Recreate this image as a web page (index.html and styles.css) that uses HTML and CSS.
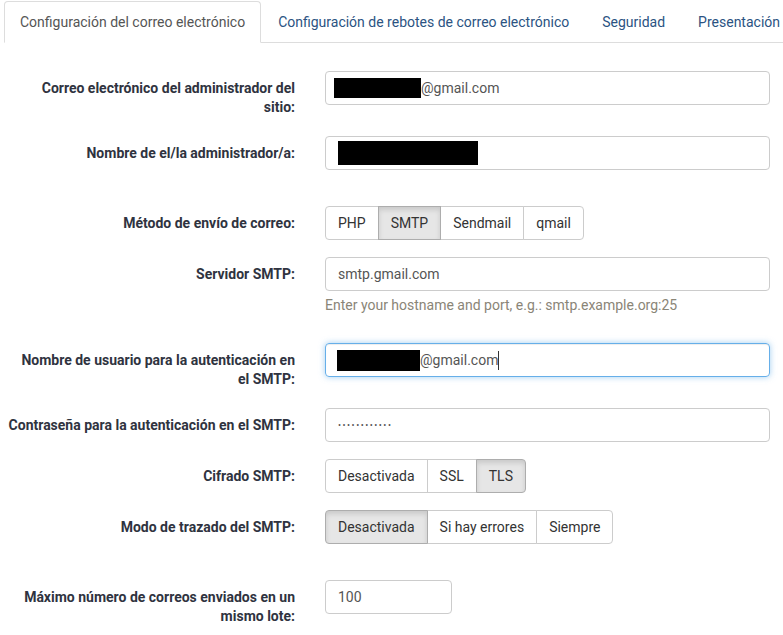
FILE: index.html
```html
<!DOCTYPE html>
<html lang="es">
<head>
    <meta charset="UTF-8">
    <meta name="viewport" content="width=device-width, initial-scale=1.0">
    <title>Configuración global - Servidor</title>
    <link rel="stylesheet" href="styles.css">
</head>
<body>
    <div class="page">
        <ul class="nav-tabs">
            <li class="active"><a href="#mail">Configuración del correo electrónico</a></li>
            <li><a href="#bounce">Configuración de rebotes de correo electrónico</a></li>
            <li><a href="#security">Seguridad</a></li>
            <li><a href="#display">Presentación</a></li>
        </ul>

        <div class="tab-content">
            <div class="control-group">
                <label class="control-label">Correo electrónico del administrador del sitio:</label>
                <div class="controls">
                    <div class="form-input"><span class="redact r-mail"></span>@gmail.com</div>
                </div>
            </div>

            <div class="control-group gap-after">
                <label class="control-label">Nombre de el/la administrador/a:</label>
                <div class="controls">
                    <div class="form-input"><span class="redact r-name"></span></div>
                </div>
            </div>

            <div class="control-group">
                <label class="control-label">Método de envío de correo:</label>
                <div class="controls">
                    <div class="btn-group">
                        <span class="btn">PHP</span>
                        <span class="btn active">SMTP</span>
                        <span class="btn">Sendmail</span>
                        <span class="btn">qmail</span>
                    </div>
                </div>
            </div>

            <div class="control-group">
                <label class="control-label">Servidor SMTP:</label>
                <div class="controls">
                    <div class="form-input">smtp.gmail.com</div>
                    <p class="help-block">Enter your hostname and port, e.g.: smtp.example.org:25</p>
                </div>
            </div>

            <div class="control-group">
                <label class="control-label">Nombre de usuario para la autenticación en el SMTP:</label>
                <div class="controls">
                    <div class="form-input focus"><span class="redact r-user"></span>@gmail.com<span class="caret-line"></span></div>
                </div>
            </div>

            <div class="control-group">
                <label class="control-label">Contraseña para la autenticación en el SMTP:</label>
                <div class="controls">
                    <div class="form-input password">••••••••••••</div>
                </div>
            </div>

            <div class="control-group">
                <label class="control-label">Cifrado SMTP:</label>
                <div class="controls">
                    <div class="btn-group">
                        <span class="btn">Desactivada</span>
                        <span class="btn">SSL</span>
                        <span class="btn active">TLS</span>
                    </div>
                </div>
            </div>

            <div class="control-group gap-after">
                <label class="control-label">Modo de trazado del SMTP:</label>
                <div class="controls">
                    <div class="btn-group">
                        <span class="btn active">Desactivada</span>
                        <span class="btn">Si hay errores</span>
                        <span class="btn">Siempre</span>
                    </div>
                </div>
            </div>

            <div class="control-group">
                <label class="control-label">Máximo número de correos enviados en un mismo lote:</label>
                <div class="controls">
                    <div class="form-input small">100</div>
                </div>
            </div>
        </div>
    </div>
</body>
</html>
```

FILE: styles.css
```css
body {
    margin: 0;
    font-family: Roboto, 'Liberation Sans', sans-serif;
    font-size: 14px;
    color: #333;
    background-color: #fff;
}
.page {
    padding: 1px 0 0 4px;
    overflow: hidden;
}

/* tabs */
.nav-tabs {
    display: flex;
    margin: 0 -4px 0 0;
    padding: 0;
    list-style: none;
    border-bottom: 1px solid #ddd;
    white-space: nowrap;
}
.nav-tabs li {
    margin: 0 1px -1px 0;
}
.nav-tabs a {
    display: block;
    padding: 10px 15px;
    line-height: 20px;
    border: 1px solid transparent;
    border-radius: 4px 4px 0 0;
    color: #2b5382;
    text-decoration: none;
}
.nav-tabs li.active a {
    color: #555;
    background-color: #fff;
    border-color: #ddd #ddd transparent;
}

/* form rows */
.tab-content {
    padding-top: 28px;
}
.control-group {
    display: flex;
    align-items: flex-start;
    margin-bottom: 17px;
}
.control-group.gap-after {
    margin-bottom: 36px;
}
.control-label {
    width: 287px;
    flex-shrink: 0;
    margin-left: 4px;
    padding: 8px 0 2px;
    line-height: 19px;
    font-size: 14px;
    font-weight: bold;
    text-align: right;
    color: #2f3340;
}
.controls {
    flex: 1;
    margin: 0 13px 0 30px;
}

/* inputs */
.form-input {
    height: 34px;
    box-sizing: border-box;
    padding: 6px 12px;
    line-height: 20px;
    border: 1px solid #ccc;
    border-radius: 4px;
    color: #555;
    display: flex;
    align-items: center;
    white-space: nowrap;
}
.form-input.focus {
    border-color: #66afe9;
    box-shadow: inset 0 1px 1px rgba(0, 0, 0, 0.075), 0 0 6px rgba(102, 175, 233, 0.6);
}
.form-input.password {
    font-size: 9px;
    letter-spacing: 1.5px;
}
.form-input.small {
    width: 127px;
}
.redact {
    display: inline-block;
    background-color: #000;
}
.r-mail {
    width: 87px;
    height: 20px;
    margin-left: -4px;
}
.r-name {
    width: 140px;
    height: 24px;
}
.r-user {
    width: 83px;
    height: 21px;
    margin-left: -1px;
}
.caret-line {
    display: inline-block;
    width: 1px;
    height: 19px;
    background-color: #333;
}
.help-block {
    margin: 5px 0 11px;
    line-height: 19px;
    color: #8a8577;
}

/* segmented buttons */
.btn-group {
    display: inline-flex;
}
.btn {
    padding: 6px 12px;
    line-height: 20px;
    border: 1px solid #ccc;
    background-color: #fff;
    color: #333;
    cursor: pointer;
}
.btn + .btn {
    margin-left: -1px;
}
.btn:first-child {
    border-radius: 4px 0 0 4px;
}
.btn:last-child {
    border-radius: 0 4px 4px 0;
}
.btn.active {
    position: relative;
    background-color: #e6e6e6;
    border-color: #adadad;
    box-shadow: inset 0 3px 5px rgba(0, 0, 0, 0.125);
}
```
